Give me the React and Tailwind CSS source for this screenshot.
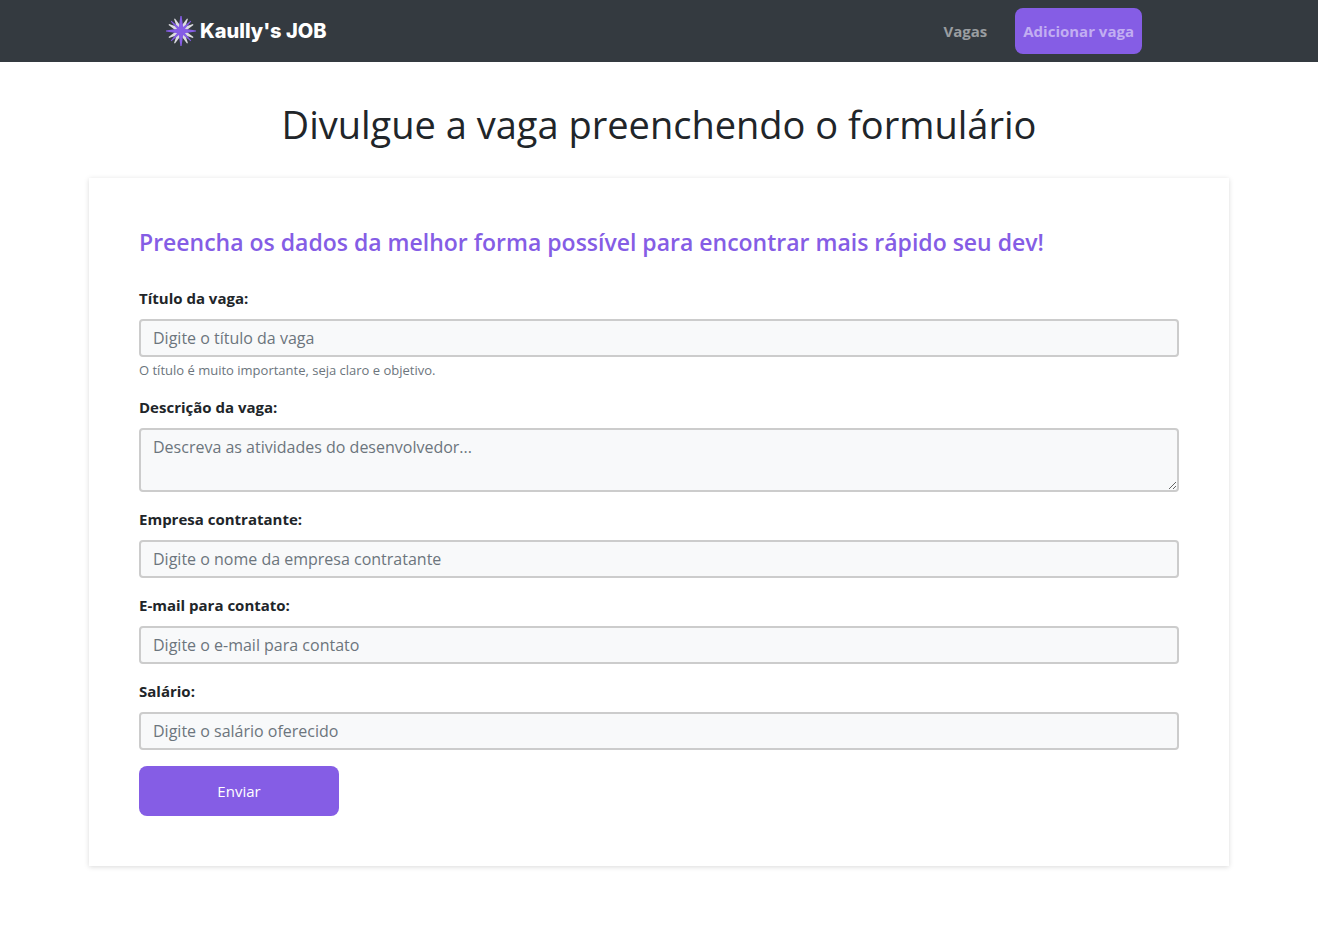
const fields = [
  { id: 'title', label: 'Título da vaga:', placeholder: 'Digite o título da vaga', hint: 'O título é muito importante, seja claro e objetivo.' },
  { id: 'description', label: 'Descrição da vaga:', placeholder: 'Descreva as atividades do desenvolvedor...', multiline: true },
  { id: 'company', label: 'Empresa contratante:', placeholder: 'Digite o nome da empresa contratante' },
  { id: 'email', label: 'E-mail para contato:', placeholder: 'Digite o e-mail para contato', type: 'email' },
  { id: 'salary', label: 'Salário:', placeholder: 'Digite o salário oferecido' },
];

const controlClass =
  'block w-full rounded border-2 border-[#ccc] bg-[#f8f9fa] px-3 text-base leading-6 text-[#495057] placeholder:text-[#6c757d] placeholder:opacity-100';

function StarLogo() {
  return (
    <svg viewBox="0 0 30 30" className="size-[30px]" aria-hidden="true">
      <g fill="#dcdce0">
        {[28, 62, 118, 152, 208, 242, 298, 332].map((angle) => (
          <path key={angle} d="M12.2 15 14.5 1.2h1L17.8 15z" transform={`rotate(${angle} 15 15)`} />
        ))}
      </g>
      <g fill="#855de5">
        {[0, 90, 180, 270].map((angle) => (
          <path key={angle} d="M12.3 15 14.4 0h1.2L17.7 15z" transform={`rotate(${angle} 15 15)`} />
        ))}
        {[45, 135, 225, 315].map((angle) => (
          <path key={angle} d="M13.4 15 14.6 1h.8L16.6 15z" transform={`rotate(${angle} 15 15)`} />
        ))}
        <circle cx="15" cy="15" r="4.2" />
      </g>
    </svg>
  );
}

function Field({ id, label, placeholder, hint, multiline, type = 'text' }) {
  return (
    <div className="mb-4">
      <label htmlFor={id} className="mb-[10px] block text-[15px] leading-[22px] font-bold">
        {label}
      </label>
      {multiline ? (
        <textarea id={id} name={id} placeholder={placeholder} className={`${controlClass} h-16 resize-y py-[5px]`} />
      ) : (
        <input id={id} name={id} type={type} placeholder={placeholder} className={`${controlClass} h-[38px]`} />
      )}
      {hint && <small className="mt-1 block text-[13px] leading-[19px] text-[#6c757d]">{hint}</small>}
    </div>
  );
}

export default function App() {
  return (
    <div className="font-['Trebuchet_MS','Open_Sans',sans-serif] text-[#212529]">
      <header className="bg-[#343a40] py-2">
        <nav className="mx-auto flex max-w-[986px] items-center justify-between pr-[10px]">
          <a href="#inicio" className="flex items-center gap-1">
            <StarLogo />
            <span className="font-['Inter',sans-serif] text-xl font-extrabold text-white">Kaully's JOB</span>
          </a>
          <div className="flex items-center gap-7 text-[15px] leading-[22px] font-bold">
            <a href="#vagas" className="text-[#9a9da0]">Vagas</a>
            <a href="#adicionar" className="rounded-lg bg-[#855de5] px-2 py-3 text-[#c2aef2]">
              Adicionar vaga
            </a>
          </div>
        </nav>
      </header>
      <main className="mx-auto max-w-[1140px] pt-[38px] pb-12">
        <h1 className="mb-[30px] text-center text-[38px] leading-[48px]">Divulgue a vaga preenchendo o formulário</h1>
        <form className="p-[50px] shadow-[0_1px_5px_rgba(0,0,0,0.15)]">
          <h2 className="mb-[30px] text-[23px] leading-[29px] font-semibold text-[#855de5]">
            Preencha os dados da melhor forma possível para encontrar mais rápido seu dev!
          </h2>
          {fields.map((field) => (
            <Field key={field.id} {...field} />
          ))}
          <button type="button" className="h-[50px] w-[200px] rounded-lg bg-[#855de5] text-[15px] font-medium text-white">
            Enviar
          </button>
        </form>
      </main>
    </div>
  );
}
